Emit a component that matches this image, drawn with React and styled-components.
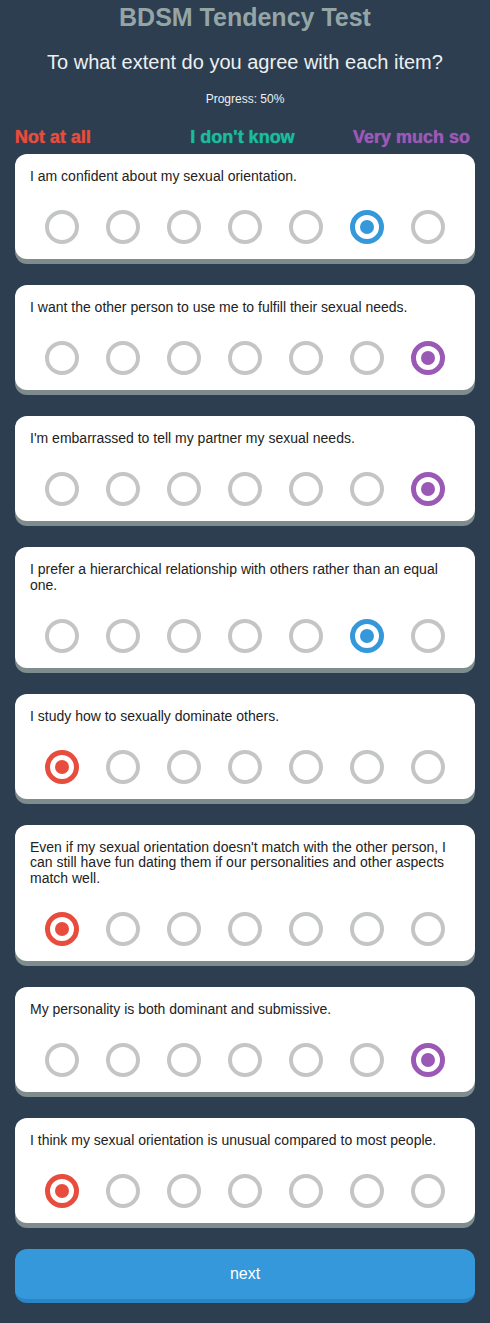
import React, { useState } from "react";
import styled, { createGlobalStyle } from "styled-components";

const GlobalStyle = createGlobalStyle`
  body {
    margin: 0;
    background: #2c3e50;
    font-family: "Liberation Sans", Arial, sans-serif;
  }
`;

const Page = styled.div`
  padding: 3px 15px 20px;
`;

const Title = styled.h1`
  margin: 0;
  font-size: 25px;
  line-height: 29px;
  font-weight: 700;
  text-align: center;
  color: #95a5a6;
`;

const Subtitle = styled.h2`
  margin: 19px 0 0;
  font-size: 20px;
  line-height: 23px;
  font-weight: 400;
  text-align: center;
  color: #ecf0f1;
`;

const Progress = styled.p`
  margin: 18px 0 0;
  font-size: 12px;
  line-height: 14px;
  text-align: center;
  color: #ecf0f1;
`;

const Legend = styled.div`
  display: grid;
  grid-template-columns: 1fr auto 1fr;
  align-items: center;
  margin-top: 21px;
  padding-right: 5px;
  font-size: 18px;
  line-height: 21px;
  font-weight: 700;
`;

const LegendLabel = styled.span`
  color: ${({ color }) => color};
  justify-self: ${({ align }) => align};
  text-shadow: 0 0 1px ${({ color }) => color};
`;

const Card = styled.div`
  background: #fff;
  border-radius: 12px;
  padding: 15px;
  box-shadow: 0 5px 0 #7f8c8d;
  margin-top: ${({ first }) => (first ? "6px" : "26px")};
`;

const Question = styled.p`
  margin: 0 0 25.5px;
  font-size: 14px;
  line-height: 15.5px;
  color: #222;
`;

const Options = styled.div`
  display: grid;
  grid-template-columns: repeat(7, 61px);
  justify-content: center;
  justify-items: center;
`;

const Radio = styled.button`
  box-sizing: border-box;
  width: 34px;
  height: 34px;
  padding: 0;
  border-radius: 50%;
  background: #fff;
  cursor: pointer;
  display: flex;
  align-items: center;
  justify-content: center;
  border: ${({ active, color }) =>
    active ? `5px solid ${color}` : "4px solid #c3c5c7"};

  &::after {
    content: "";
    display: ${({ active }) => (active ? "block" : "none")};
    width: 14px;
    height: 14px;
    border-radius: 50%;
    background: ${({ color }) => color};
  }
`;

const NextButton = styled.button`
  display: block;
  width: 100%;
  height: 54px;
  margin-top: 26px;
  border: 0;
  border-bottom: 4px solid #2a85c4;
  border-radius: 12px;
  background: #3498db;
  color: #fff;
  font-family: "Liberation Sans", Arial, sans-serif;
  font-size: 16px;
  cursor: pointer;
`;

const scaleColors = [
  "#e74c3c",
  "#e67e22",
  "#f1c40f",
  "#1abc9c",
  "#2ecc71",
  "#3498db",
  "#9b59b6",
];

const items = [
  { text: "I am confident about my sexual orientation.", value: 5 },
  {
    text: "I want the other person to use me to fulfill their sexual needs.",
    value: 6,
  },
  { text: "I'm embarrassed to tell my partner my sexual needs.", value: 6 },
  {
    text: "I prefer a hierarchical relationship with others rather than an equal one.",
    value: 5,
  },
  { text: "I study how to sexually dominate others.", value: 0 },
  {
    text: "Even if my sexual orientation doesn't match with the other person, I can still have fun dating them if our personalities and other aspects match well.",
    value: 0,
  },
  { text: "My personality is both dominant and submissive.", value: 6 },
  {
    text: "I think my sexual orientation is unusual compared to most people.",
    value: 0,
  },
];

export default function App() {
  const [answers, setAnswers] = useState(items.map((i) => i.value));

  const pick = (q, v) =>
    setAnswers((prev) => prev.map((a, idx) => (idx === q ? v : a)));

  return (
    <>
      <GlobalStyle />
      <Page>
        <Title>BDSM Tendency Test</Title>
        <Subtitle>To what extent do you agree with each item?</Subtitle>
        <Progress>Progress: 50%</Progress>
        <Legend>
          <LegendLabel color="#e74c3c" align="start">
            Not at all
          </LegendLabel>
          <LegendLabel color="#1abc9c" align="center">
            I don't know
          </LegendLabel>
          <LegendLabel color="#9b59b6" align="end">
            Very much so
          </LegendLabel>
        </Legend>

        {items.map((item, q) => (
          <Card key={q} first={q === 0}>
            <Question>{item.text}</Question>
            <Options>
              {scaleColors.map((c, v) => (
                <Radio
                  key={v}
                  type="button"
                  color={c}
                  active={answers[q] === v}
                  onClick={() => pick(q, v)}
                />
              ))}
            </Options>
          </Card>
        ))}

        <NextButton type="button">next</NextButton>
      </Page>
    </>
  );
}
